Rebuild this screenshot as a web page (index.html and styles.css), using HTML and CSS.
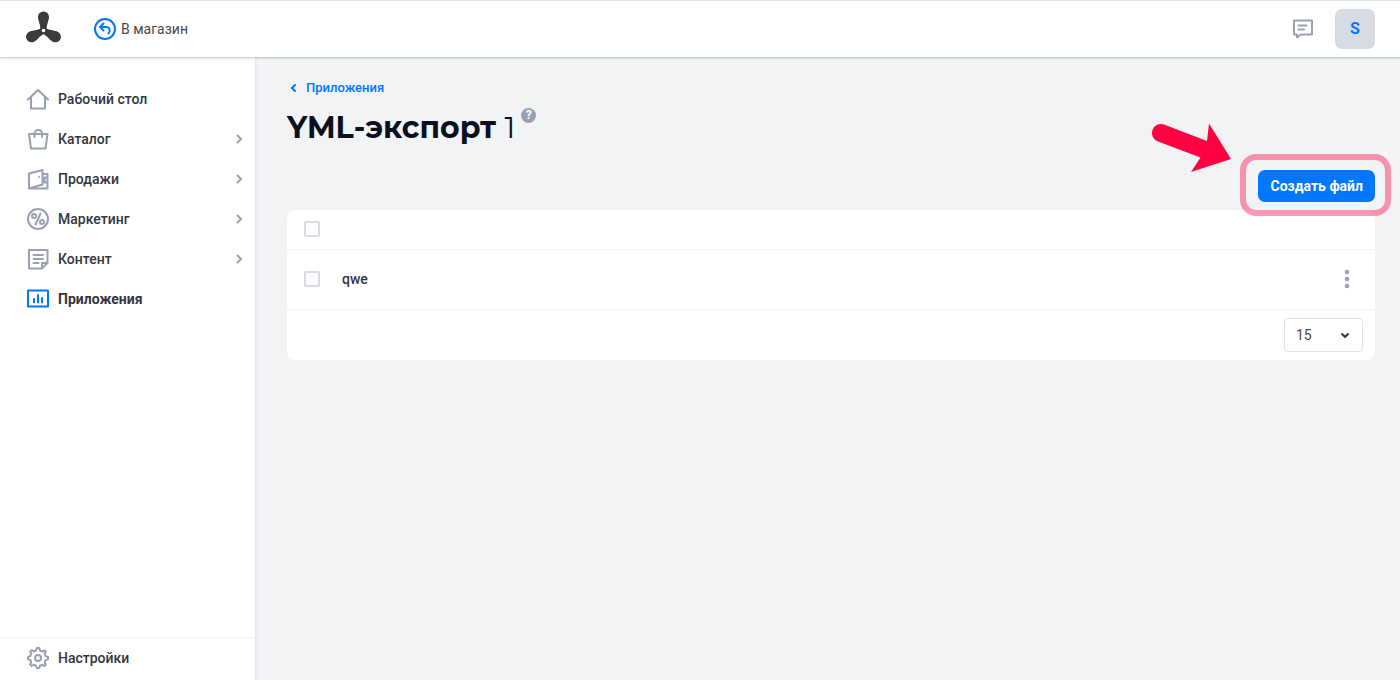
FILE: index.html
```html
<!DOCTYPE html>
<html lang="ru">
<head>
<meta charset="utf-8">
<meta name="viewport" content="width=device-width, initial-scale=1">
<title>YML-экспорт</title>
<link rel="stylesheet" href="styles.css">
</head>
<body>
<div class="app">
  <header class="topbar">
    <a class="logo" href="#" aria-label="Главная">
      <svg width="36" height="34" viewBox="0 0 36 34" fill="#3b3b3b">
        <path d="M14.500 19.500C14.500 13 12 9.500 12 6A5.500 5.500 0 0 1 23 6C23 9.500 20.500 13 20.500 19.500Z"/>
        <path transform="rotate(118 17.500 19.500)" d="M14.500 19.500C14.500 13 12 9.500 12 6A5.500 5.500 0 0 1 23 6C23 9.500 20.500 13 20.500 19.500Z"/>
        <path transform="rotate(-118 17.500 19.500)" d="M14.500 19.500C14.500 13 12 9.500 12 6A5.500 5.500 0 0 1 23 6C23 9.500 20.500 13 20.500 19.500Z"/>
        <circle cx="17.500" cy="19.500" r="3.500"/>
        <circle cx="17.500" cy="19.500" r="1.800" fill="#fff"/>
      </svg>
    </a>
    <a class="shop-link" href="#">
      <svg width="22" height="22" viewBox="0 0 22 22" fill="none" stroke="#0077ff" stroke-width="2" stroke-linecap="round" stroke-linejoin="round">
        <circle cx="11" cy="11" r="10"/>
        <path d="M9.500 5.500L6 9L9.500 12.500M6 9H12C15.500 9 17 12.500 14.500 15.500"/>
      </svg>
      <span>В магазин</span>
    </a>
    <div class="topbar-right">
      <button class="icon-button" type="button" aria-label="Сообщения">
        <svg width="22" height="20" viewBox="0 0 22 20" fill="none" stroke="#98a1b3" stroke-width="2" stroke-linejoin="round" stroke-linecap="round">
          <path d="M2 1.500H20V15.500H9L5 18.500V15.500H2Z"/>
          <path d="M6.500 6.500H14.500M6.500 10.500H12"/>
        </svg>
      </button>
      <button class="avatar" type="button" aria-label="Профиль">S</button>
    </div>
  </header>

  <aside class="sidebar">
    <nav class="nav">
      <a class="nav-item" href="#">
        <svg class="nav-icon" viewBox="0 0 22 22"><path d="M1 11.500L11 2L21 11.500M4 9V20.500H18V9"/></svg>
        <span>Рабочий стол</span>
      </a>
      <a class="nav-item" href="#">
        <svg class="nav-icon" viewBox="0 0 22 22"><path d="M2 6H20.500L18.500 20.500H4ZM7.500 9V6C7.500 0.700 15 0.700 15 6V9"/></svg>
        <span>Каталог</span>
        <svg class="chevron" viewBox="0 0 8 10"><path d="M2 1L6 5L2 9"/></svg>
      </a>
      <a class="nav-item" href="#">
        <svg class="nav-icon" viewBox="0 0 22 22"><path d="M2 5.500L15.500 2V16.500L2 20.500ZM16 6H20.500V20.500H2M20 9.500H17.500V14.500H20"/><circle class="solid" cx="12" cy="9" r="1"/></svg>
        <span>Продажи</span>
        <svg class="chevron" viewBox="0 0 8 10"><path d="M2 1L6 5L2 9"/></svg>
      </a>
      <a class="nav-item" href="#">
        <svg class="nav-icon" viewBox="0 0 22 22"><circle cx="11" cy="11" r="10"/><path d="M13.500 5.500L8.500 16.500"/><circle cx="7" cy="8" r="2"/><circle cx="15" cy="14" r="2"/></svg>
        <span>Маркетинг</span>
        <svg class="chevron" viewBox="0 0 8 10"><path d="M2 1L6 5L2 9"/></svg>
      </a>
      <a class="nav-item" href="#">
        <svg class="nav-icon" viewBox="0 0 22 22"><path d="M2 2H20.500V15L15 20.500H2ZM20.500 15H15V20.500M6.500 7H16M6.500 11H16M6.500 15H11.500"/></svg>
        <span>Контент</span>
        <svg class="chevron" viewBox="0 0 8 10"><path d="M2 1L6 5L2 9"/></svg>
      </a>
      <a class="nav-item nav-item-active" href="#" aria-current="page">
        <svg class="nav-icon" viewBox="0 0 22 22"><path d="M1 2.500H21V18.500H1ZM7 11V14.500M11 7V14.500M15 10V14.500"/></svg>
        <span>Приложения</span>
      </a>
    </nav>
    <div class="sidebar-footer">
      <a class="nav-item" href="#">
        <svg class="nav-icon" viewBox="0 0 22 22"><path d="M9 3.500L9.800 1H12.200L13 3.500L15.500 4.500L17.800 3.400L19 4.600L17.800 6.800L18.600 9.100L21 10V12.200L18.600 13.100L17.700 15.300L18.800 17.500L17.300 19L15.200 17.800L13 18.700L12.200 21H9.800L9 18.700L6.800 17.800L4.600 18.900L3.100 17.400L4.200 15.200L3.400 13L1 12.200V9.900L3.400 9L4.300 6.700L3.200 4.600L4.700 3.200L6.800 4.400Z"/><circle cx="11" cy="11" r="3"/></svg>
        <span>Настройки</span>
      </a>
    </div>
  </aside>

  <main class="content">
    <a class="back-link" href="#">
      <svg width="8" height="8" viewBox="0 0 8 8" fill="none" stroke="#0077ff" stroke-width="2" stroke-linecap="round" stroke-linejoin="round"><path d="M5 1L2 4L5 7"/></svg>
      <span>Приложения</span>
    </a>
    <div class="title-row">
      <h1 class="title">YML-экспорт <span class="count">1</span></h1>
      <button class="help" type="button" aria-label="Справка">?</button>
    </div>
    <div class="actions">
      <div class="callout">
        <button class="primary" type="button">Создать файл</button>
        <div class="callout-ring"></div>
        <svg class="callout-arrow" width="82" height="50" viewBox="0 0 82 50" fill="#ff0040"><path d="M14 1.500L57 18L59 0.500L81 36L41 49L50.500 34.500L8 18.500A9 9 0 0 1 14 1.500Z"/></svg>
      </div>
    </div>
    <section class="panel">
      <table class="files">
        <thead>
          <tr>
            <th class="cell-check"><input class="check" type="checkbox" aria-label="Выбрать все"></th>
            <th></th>
            <th></th>
          </tr>
        </thead>
        <tbody>
          <tr>
            <td class="cell-check"><input class="check" type="checkbox" aria-label="Выбрать qwe"></td>
            <td class="cell-name">qwe</td>
            <td class="cell-menu">
              <button class="menu-button" type="button" aria-label="Действия">
                <svg width="6" height="20" viewBox="0 0 6 20" fill="#98a1b3"><circle cx="3" cy="3" r="2.300"/><circle cx="3" cy="10" r="2.300"/><circle cx="3" cy="17" r="2.300"/></svg>
              </button>
            </td>
          </tr>
        </tbody>
      </table>
      <div class="pager">
        <div class="select-wrap">
          <select class="page-size" aria-label="Строк на странице">
            <option>15</option>
          </select>
          <svg class="select-arrow" width="10" height="8" viewBox="0 0 10 8" fill="none" stroke="#33363d" stroke-width="2" stroke-linecap="round" stroke-linejoin="round"><path d="M2 2L5 5L8 2"/></svg>
        </div>
      </div>
    </section>
  </main>
</div>
</body>
</html>
```
FILE: styles.css
```css
* {
  box-sizing: border-box;
}

body {
  margin: 0;
  background: #f1f3f5;
  color: #33363d;
  font: 500 14px/20px Roboto, "Open Sans", sans-serif;
}

a {
  color: inherit;
  text-decoration: none;
}

button {
  border: 0;
  padding: 0;
  background: none;
  font: inherit;
  cursor: pointer;
}

svg {
  display: block;
  flex: none;
}

.app {
  display: grid;
  grid-template: auto 1fr / 256px 1fr;
  min-height: 100vh;
}

.topbar {
  grid-column: 1 / -1;
  z-index: 1;
  display: flex;
  align-items: center;
  padding: 8px 25px 8px 26px;
  background: #fff;
  border-top: 1px solid #e2e3e5;
  box-shadow: 0 1px 2px rgba(40, 50, 80, 0.3);
}

.logo {
  margin-right: 32px;
  padding-bottom: 2px;
}

.shop-link {
  display: flex;
  align-items: center;
  gap: 5px;
  color: #45484e;
  font-weight: 400;
}

.topbar-right {
  display: flex;
  align-items: center;
  gap: 21px;
  margin-left: auto;
}

.avatar {
  width: 40px;
  height: 40px;
  border-radius: 7px;
  background: #d7dbe3;
  color: #0077ff;
  font-size: 16px;
  font-weight: 700;
}

.sidebar {
  display: flex;
  flex-direction: column;
  justify-content: space-between;
  padding-top: 22px;
  background: #fff;
  border-right: 1px solid #e6e8eb;
  box-shadow: 1px 0 3px rgba(40, 50, 80, 0.06);
}

.nav-item {
  display: flex;
  align-items: center;
  gap: 9px;
  height: 40px;
  padding: 0 12px 0 27px;
}

.nav-item-active {
  font-weight: 700;
}

.nav-icon {
  width: 22px;
  height: 22px;
  fill: none;
  stroke: #98a1b3;
  stroke-width: 2;
  stroke-linejoin: round;
  stroke-linecap: round;
}

.nav-icon .solid {
  fill: #98a1b3;
  stroke: none;
}

.nav-item-active .nav-icon {
  stroke: #0077ff;
}

.chevron {
  width: 8px;
  height: 10px;
  margin-left: auto;
  fill: none;
  stroke: #98a1b3;
  stroke-width: 2;
}

.sidebar-footer {
  padding-bottom: 2px;
  border-top: 1px solid #f0f1f3;
}

.content {
  padding: 20px 25px 32px 31px;
}

.back-link {
  display: inline-flex;
  align-items: center;
  gap: 8px;
  padding-left: 3px;
  color: #0077ff;
  font-size: 13px;
}

.title-row {
  display: flex;
  align-items: flex-start;
  gap: 6px;
  margin-top: 10px;
}

.title {
  margin: 0;
  color: #0b1020;
  font: 700 30px/40px Montserrat, Inter, sans-serif;
}

.count {
  font-weight: 400;
}

.help {
  width: 15px;
  height: 15px;
  border-radius: 50%;
  background: #98a1b3;
  color: #fff;
  font-size: 12px;
  font-weight: 700;
  line-height: 15px;
}

.actions {
  display: flex;
  justify-content: flex-end;
  margin: 22px 0 8px;
}

.callout {
  position: relative;
}

.primary {
  display: block;
  height: 32px;
  padding: 0 12px;
  border-radius: 7px;
  background: #0077ff;
  color: #fff;
  font-weight: 700;
}

.callout-ring {
  position: absolute;
  inset: -16px -16px -14px -18px;
  border: 6px solid rgba(255, 0, 64, 0.4);
  border-radius: 16px;
  pointer-events: none;
}

.callout-arrow {
  position: absolute;
  right: 143px;
  bottom: 29px;
  pointer-events: none;
}

.panel {
  background: #fff;
  border-radius: 8px;
}

.files {
  width: 100%;
  border-collapse: collapse;
}

.files th,
.files td {
  height: 39px;
  padding: 0;
  border-bottom: 1px solid #f1f3f5;
  text-align: left;
}

.files td {
  height: 60px;
}

.files .cell-check {
  width: 55px;
  padding-left: 17px;
}

.check {
  display: block;
  appearance: none;
  width: 16px;
  height: 16px;
  margin: 0;
  border: 2px solid #d7dbe3;
  border-radius: 2px;
  background: #fff;
}

.files .cell-menu {
  width: 44px;
  padding-left: 13px;
}

.menu-button {
  display: block;
}

.pager {
  display: flex;
  justify-content: flex-end;
  padding: 8px 12px;
}

.select-wrap {
  position: relative;
}

.page-size {
  display: block;
  appearance: none;
  width: 79px;
  height: 34px;
  padding: 0 11px;
  border: 1px solid #dfe2e8;
  border-radius: 4px;
  background: #fff;
  color: #45484e;
  font: 400 14px/20px Roboto, sans-serif;
}

.select-arrow {
  position: absolute;
  right: 13px;
  top: 14px;
  pointer-events: none;
}
```
